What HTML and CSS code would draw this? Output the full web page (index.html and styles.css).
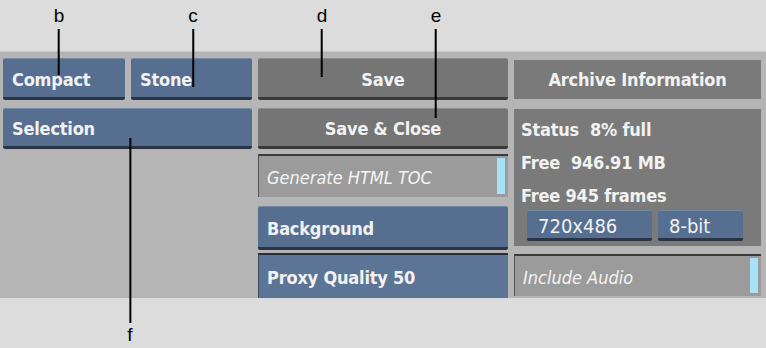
FILE: index.html
```html
<!DOCTYPE html>
<html lang="en">
<head>
    <meta charset="UTF-8">
    <title>Archive Settings</title>
    <link rel="stylesheet" href="styles.css">
</head>
<body>
    <div class="callouts">
        <div class="callout" style="left:59px"><span>b</span><i style="height:46px"></i></div>
        <div class="callout" style="left:193px"><span>c</span><i style="height:58px"></i></div>
        <div class="callout" style="left:322px"><span>d</span><i style="height:48px"></i></div>
        <div class="callout" style="left:436px"><span>e</span><i style="height:89px"></i></div>
        <div class="callout up" style="left:130px"><i style="height:185px"></i><span>f</span></div>
    </div>

    <div class="panel">
        <div class="col col-left">
            <div class="pair">
                <div class="btn blue">Compact</div>
                <div class="btn blue">Stone</div>
            </div>
            <div class="btn blue row2">Selection</div>
        </div>

        <div class="col col-mid">
            <div class="btn gray center">Save</div>
            <div class="btn gray center row2">Save &amp; Close</div>
            <div class="toggle row3">Generate HTML TOC<b></b></div>
            <div class="btn blue row4">Background</div>
            <div class="field row5">Proxy Quality 50</div>
        </div>

        <div class="col col-right">
            <div class="title">Archive Information</div>
            <div class="info">
                <p>Status&nbsp; 8% full</p>
                <p>Free&nbsp; 946.91 MB</p>
                <p>Free 945 frames</p>
                <div class="chips">
                    <div class="btn blue chip wide">720x486</div>
                    <div class="btn blue chip">8-bit</div>
                </div>
            </div>
            <div class="toggle audio">Include Audio<b></b></div>
        </div>
    </div>
</body>
</html>
```

FILE: styles.css
```css
body {
    margin: 0;
    background-color: #dcdcdc;
    font-family: "DejaVu Sans Condensed", "DejaVu Sans", sans-serif;
    font-weight: bold;
    font-size: 18px;
    letter-spacing: -0.2px;
    color: #f2f2f2;
    width: 766px;
    height: 348px;
    overflow: hidden;
    position: relative;
}
.panel {
    margin-top: 51px;
    height: 247px;
    background-color: #b5b5b5;
    border-top: 1px solid #c8c8c8;
    display: grid;
    grid-template-columns: 249px 250px 247px;
    column-gap: 6px;
    padding-left: 3px;
    box-sizing: border-box;
}
.col {
    display: flex;
    flex-direction: column;
}
.pair {
    display: flex;
    gap: 6px;
    margin-top: 6px;
}
.pair .btn {
    width: 122px;
    flex: none;
}
.pair .btn:last-child {
    width: 121px;
}
.btn {
    height: 42px;
    box-sizing: border-box;
    display: flex;
    align-items: center;
    padding: 2px 0 0 9px;
    border-top: 1px solid rgba(255, 255, 255, 0.18);
    border-bottom: 3px solid #2b3445;
    border-radius: 2px;
}
.blue {
    background-color: #566f91;
}
.gray {
    background-color: #757575;
    border-bottom-color: #393939;
}
.center {
    justify-content: center;
    padding-left: 0;
}
.col-mid .btn:first-child {
    margin-top: 6px;
}
.row2 {
    margin-top: 8px;
    height: 41px;
}
.toggle {
    position: relative;
    height: 43px;
    box-sizing: border-box;
    background-color: #9b9b9b;
    border-top: 2px solid #3a3a3a;
    border-left: 1px solid #555;
    padding: 2px 0 0 8px;
    display: flex;
    align-items: center;
    font-style: italic;
    font-weight: normal;
    letter-spacing: 0;
    color: #f4f4f4;
}
.toggle b {
    position: absolute;
    right: 3px;
    top: 2px;
    bottom: 3px;
    width: 8px;
    background-color: #a6e1f6;
}
.row3 {
    margin-top: 5px;
}
.row4 {
    margin-top: 9px;
    height: 44px;
}
.field {
    margin-top: 3px;
    height: 45px;
    box-sizing: border-box;
    background-color: #5c7596;
    border-top: 2px solid #2a2f38;
    border-left: 1px solid #3e4a5c;
    padding: 2px 0 0 8px;
    display: flex;
    align-items: center;
}
.title {
    margin-top: 8px;
    height: 39px;
    background-color: #7a7a7a;
    display: flex;
    align-items: center;
    justify-content: center;
}
.info {
    margin-top: 10px;
    height: 137px;
    background-color: #7a7a7a;
    padding: 6px 0 0 7px;
    box-sizing: border-box;
}
.info p {
    margin: 0;
    height: 33px;
    line-height: 30px;
}
.chips {
    display: flex;
    gap: 6px;
    margin-top: -4px;
    padding-left: 6px;
}
.chip {
    height: 31px;
    width: 85px;
    padding-left: 11px;
    font-weight: normal;
    font-size: 20px;
    letter-spacing: 0;
}
.chip.wide {
    width: 125px;
}
.audio {
    margin-top: 8px;
    height: 42px;
}
.callouts {
    position: absolute;
    left: 0;
    top: 0;
    width: 100%;
    height: 100%;
    z-index: 2;
    pointer-events: none;
}
.callout {
    position: absolute;
    top: 5px;
    display: flex;
    flex-direction: column;
    align-items: center;
    transform: translateX(-50%);
    font-family: "Liberation Sans", Arial, sans-serif;
    font-weight: normal;
    font-size: 19px;
    letter-spacing: 0;
    color: #000;
}
.callout span {
    line-height: 22px;
}
.callout i {
    width: 2px;
    background-color: #000;
    margin-top: 2px;
}
.callout.up {
    top: 138px;
}
.callout.up i {
    margin-top: 0;
    margin-bottom: 1px;
}
```
